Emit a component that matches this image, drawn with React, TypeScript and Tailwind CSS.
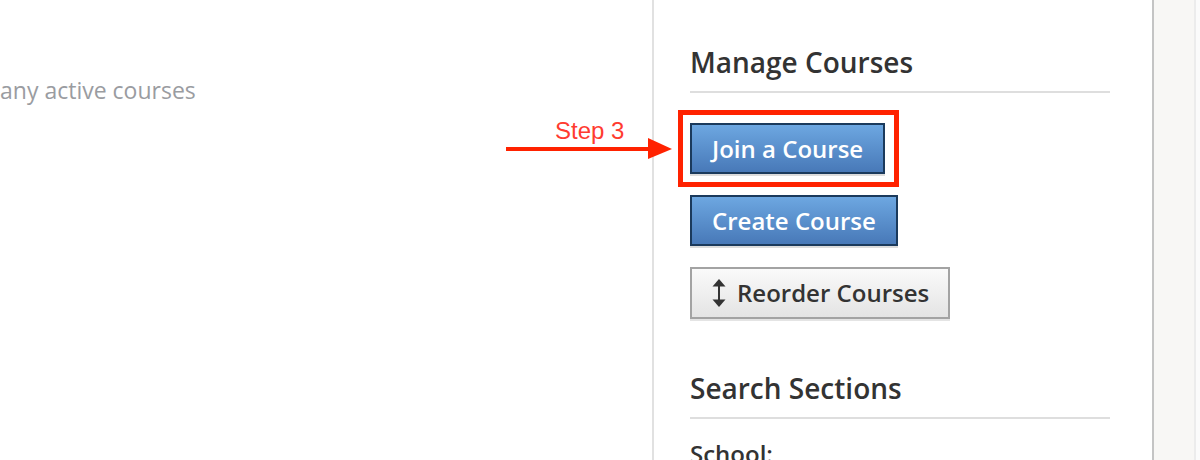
import type { ReactNode } from 'react';

function BlueButton({ children }: { children: ReactNode }) {
  return (
    <button className="h-[51px] px-[20px] border-2 border-[#1b3a5c] bg-gradient-to-b from-[#6da7e1] to-[#4879b8] text-white text-[24px] font-semibold leading-none shadow-[0_2px_0_#dcdcdc] flex items-center">
      {children}
    </button>
  );
}

function ReorderIcon() {
  return (
    <svg width="14" height="28" viewBox="0 0 14 28" className="shrink-0">
      <path d="M7 0 L13.5 7.5 L0.5 7.5 Z" fill="#333" />
      <rect x="6" y="6" width="2" height="16" fill="#333" />
      <path d="M7 28 L13.5 20.5 L0.5 20.5 Z" fill="#333" />
    </svg>
  );
}

export default function App() {
  return (
    <div className="relative flex h-[460px] w-[1200px] overflow-hidden bg-white font-['Open_Sans',sans-serif]">
      {/* Main column */}
      <div className="w-[652px] shrink-0">
        <p className="mt-[74px] text-[23px] leading-[32px] text-[#9a9ca1] whitespace-nowrap">
          any active courses
        </p>
      </div>

      {/* Sidebar */}
      <aside className="w-[502px] shrink-0 border-l-2 border-r-2 border-l-[#e1e1e1] border-r-[#c4c4c4] pl-[36px] pr-[42px] pt-[46px]">
        <h2 className="text-[28px] font-semibold leading-[32px] text-[#333] pb-[13px] border-b-2 border-[#dedede]">
          Manage Courses
        </h2>

        <div className="mt-[30px] flex flex-col items-start gap-[21px]">
          <div className="relative">
            <BlueButton>Join a Course</BlueButton>
            <div className="pointer-events-none absolute -left-[12px] -top-[13px] w-[221px] h-[77px] border-[5px] border-[#ff2200]" />
          </div>
          <BlueButton>Create Course</BlueButton>
          <button className="h-[52px] pl-[20px] pr-[19px] border-2 border-[#a3a3a3] bg-gradient-to-b from-[#fafafa] to-[#e4e4e4] text-[#333] text-[24px] font-semibold leading-none shadow-[0_2px_0_#e4e4e4] flex items-center gap-[11px]">
            <ReorderIcon />
            Reorder Courses
          </button>
        </div>

        <h2 className="mt-[53px] text-[28px] font-semibold leading-[32px] text-[#333] pb-[13px] border-b-2 border-[#dedede]">
          Search Sections
        </h2>
        <div className="mt-[20px] text-[24px] font-semibold leading-[30px] text-[#333]">School:</div>
      </aside>

      {/* Gutter */}
      <div className="w-[40px] shrink-0 bg-[#f8f7f5]" />
      <div className="flex-1 border-l-2 border-[#ececec] bg-[#fbfbfb]" />

      {/* Annotation */}
      <span className="absolute left-[555px] top-[119px] font-['Liberation_Sans',Arial,sans-serif] text-[24px] leading-[24px] text-[#ff3b30]">
        Step 3
      </span>
      <svg className="absolute left-[506px] top-[138px]" width="166" height="22" viewBox="0 0 166 22">
        <rect x="0" y="9" width="146" height="4" fill="#ff2200" />
        <path d="M142 0 L166 11 L142 21 Z" fill="#ff2200" />
      </svg>
    </div>
  );
}
